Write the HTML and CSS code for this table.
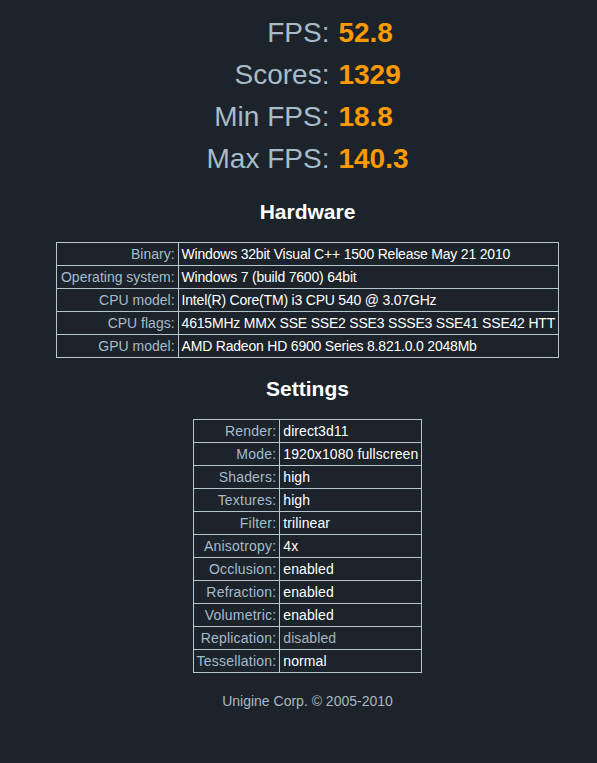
FILE: index.html
```html
<!DOCTYPE html>
<html>
<head>
<meta charset="utf-8">
<link rel="stylesheet" href="styles.css">
</head>
<body>
<div class="page">
  <table class="stats">
    <tr><td class="sl">FPS:</td><td class="sv">52.8</td></tr>
    <tr><td class="sl">Scores:</td><td class="sv">1329</td></tr>
    <tr><td class="sl">Min FPS:</td><td class="sv">18.8</td></tr>
    <tr><td class="sl">Max FPS:</td><td class="sv">140.3</td></tr>
  </table>

  <h2 class="title hw-title">Hardware</h2>
  <table class="info hw">
    <tr><td class="k">Binary:</td><td class="v">Windows 32bit Visual C++ 1500 Release May 21 2010</td></tr>
    <tr><td class="k">Operating system:</td><td class="v">Windows 7 (build 7600) 64bit</td></tr>
    <tr><td class="k">CPU model:</td><td class="v">Intel(R) Core(TM) i3 CPU 540 @ 3.07GHz</td></tr>
    <tr><td class="k">CPU flags:</td><td class="v">4615MHz MMX SSE SSE2 SSE3 SSSE3 SSE41 SSE42 HTT</td></tr>
    <tr><td class="k">GPU model:</td><td class="v">AMD Radeon HD 6900 Series 8.821.0.0 2048Mb</td></tr>
  </table>

  <h2 class="title st-title">Settings</h2>
  <table class="info st">
    <tr><td class="k">Render:</td><td class="v">direct3d11</td></tr>
    <tr><td class="k">Mode:</td><td class="v">1920x1080 fullscreen</td></tr>
    <tr><td class="k">Shaders:</td><td class="v">high</td></tr>
    <tr><td class="k">Textures:</td><td class="v">high</td></tr>
    <tr><td class="k">Filter:</td><td class="v">trilinear</td></tr>
    <tr><td class="k">Anisotropy:</td><td class="v">4x</td></tr>
    <tr><td class="k">Occlusion:</td><td class="v">enabled</td></tr>
    <tr><td class="k">Refraction:</td><td class="v">enabled</td></tr>
    <tr><td class="k">Volumetric:</td><td class="v">enabled</td></tr>
    <tr><td class="k">Replication:</td><td class="v off">disabled</td></tr>
    <tr><td class="k">Tessellation:</td><td class="v">normal</td></tr>
  </table>

  <p class="footer">Unigine Corp. © 2005-2010</p>
</div>
</body>
</html>
```

FILE: styles.css
```css
html, body {
  margin: 0;
  padding: 0;
  background: #1c232a;
}
body {
  font-family: "Liberation Sans", Arial, sans-serif;
  color: #ffffff;
}
.page {
  padding: 12px 0 0 18px;
  display: flex;
  flex-direction: column;
  align-items: center;
}
.stats {
  border-collapse: collapse;
  font-size: 28px;
}
.stats td {
  padding: 0;
  height: 42px;
  line-height: 32px;
}
.stats .sl {
  color: #a6bccb;
  text-align: right;
  padding-right: 9px;
}
.sv {
  color: #ff9900;
  font-weight: bold;
  text-align: left;
}
.title {
  font-size: 21px;
  font-weight: bold;
  color: #ffffff;
  margin: 0;
  line-height: 24px;
}
.hw-title {
  margin-top: 20px;
  margin-bottom: 18px;
}
.st-title {
  margin-top: 19px;
  margin-bottom: 18px;
}
.info {
  border-collapse: collapse;
  font-size: 14px;
}
.info td {
  border: 1px solid #b4c6cf;
  padding: 3px 3px;
  line-height: 16px;
  white-space: nowrap;
}
.hw .k {
  padding-left: 4px;
}
.hw .v {
  letter-spacing: -0.2px;
}
.st .k {
  letter-spacing: 0.2px;
  padding-left: 3px;
}
.st .v {
  letter-spacing: 0.1px;
}
.k {
  color: #a6bccb;
  text-align: right;
}
.v {
  color: #ffffff;
  text-align: left;
}
.v.off {
  color: #a9b4bb;
}
.footer {
  margin: 20px 0 0 0;
  font-size: 14px;
  color: #a9b8c2;
  line-height: 16px;
}
```
